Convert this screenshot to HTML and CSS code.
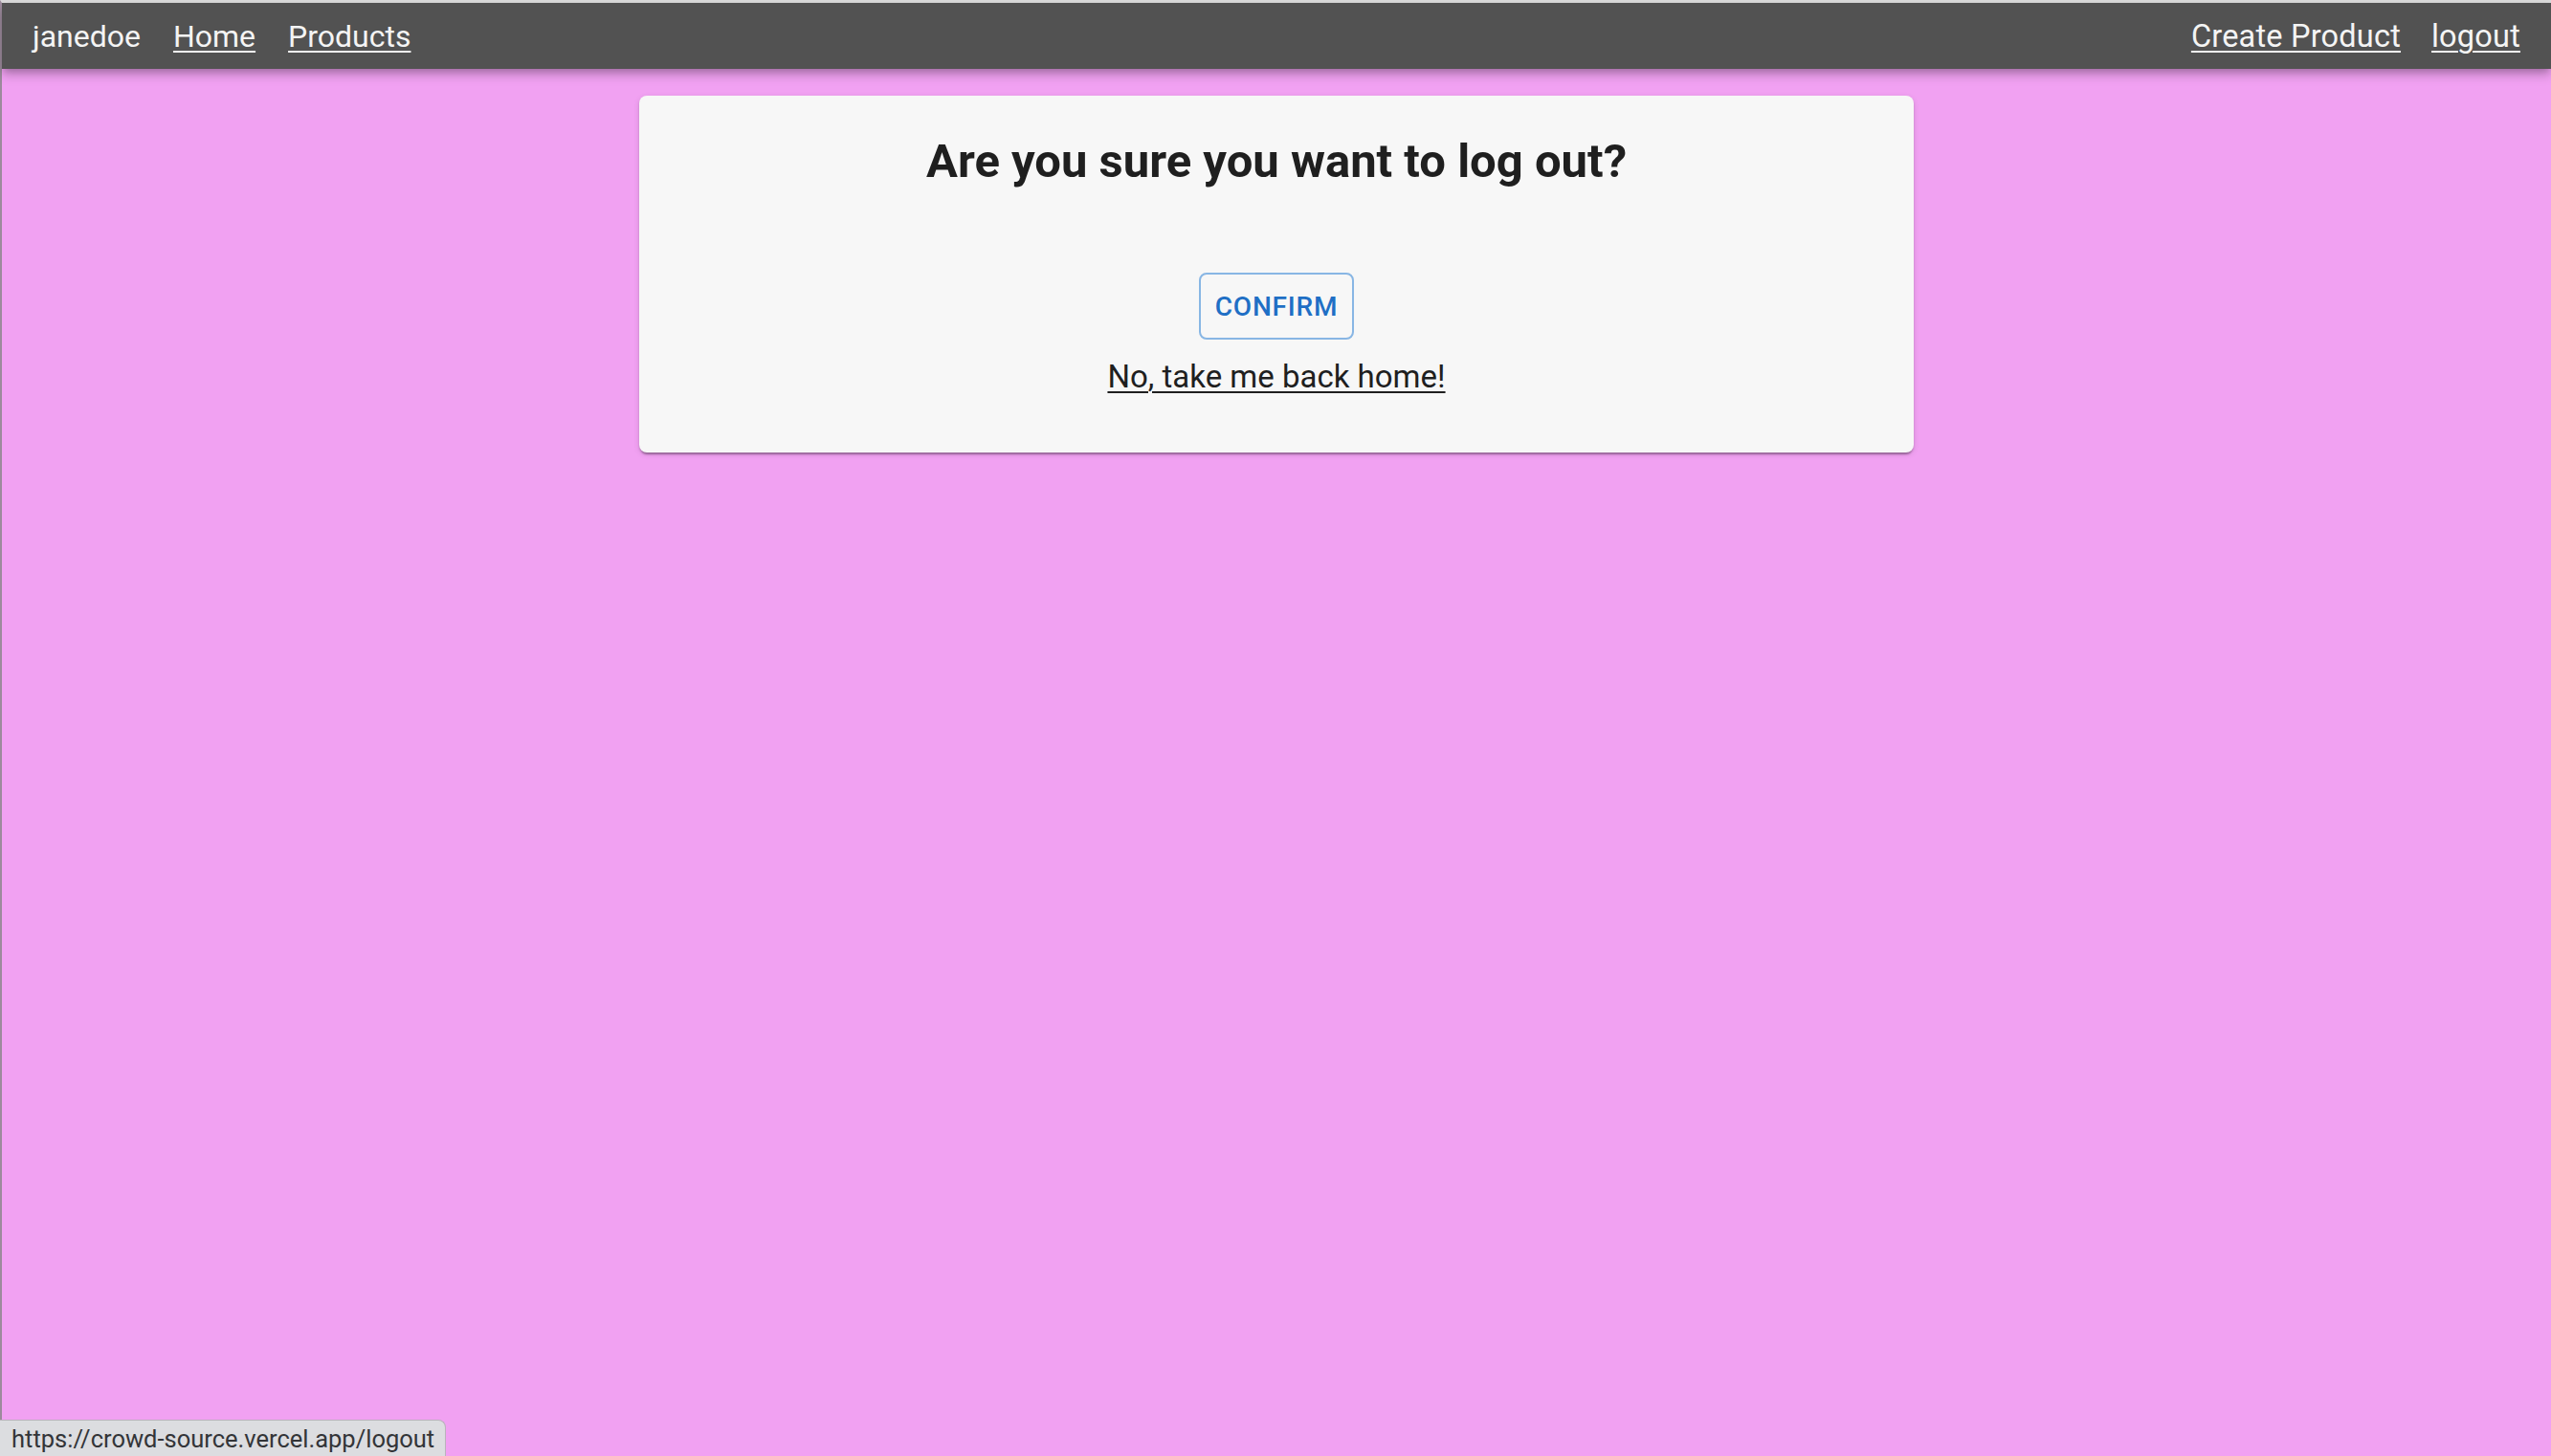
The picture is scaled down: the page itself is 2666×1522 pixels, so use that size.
FILE: index.html
```html
<!DOCTYPE html>
<html lang="en">
<head>
<meta charset="utf-8">
<title>Logout</title>
<link rel="stylesheet" href="styles.css">
</head>
<body>
<div class="frame">
  <header class="nav">
    <div class="nav-group">
      <span class="nav-user">janedoe</span>
      <a class="nav-link" href="#">Home</a>
      <a class="nav-link" href="#">Products</a>
    </div>
    <div class="nav-group nav-group-right">
      <a class="nav-link" href="#">Create Product</a>
      <a class="nav-link" href="#">logout</a>
    </div>
  </header>
  <main class="content">
    <section class="card">
      <h1 class="card-title">Are you sure you want to log out?</h1>
      <button class="btn-outline" type="button">Confirm</button>
      <a class="back-link" href="#">No, take me back home!</a>
    </section>
  </main>
</div>
<div class="status-bar">https://crowd-source.vercel.app/logout</div>
</body>
</html>
```

FILE: styles.css
```css
html, body {
  margin: 0;
  padding: 0;
}
body {
  background: #f1a1f2;
  font-family: Roboto, "Liberation Sans", Arial, sans-serif;
  min-height: 100vh;
}
.frame {
  min-height: 1520px;
  border-top: 3px solid #d9d9d9;
  border-left: 2px solid #9c8a9c;
  box-sizing: border-box;
}
.nav {
  display: flex;
  justify-content: space-between;
  align-items: center;
  height: 69px;
  padding: 2px 32px 0;
  box-sizing: border-box;
  background: #525252;
  box-shadow: 0 4px 8px -2px rgba(0,0,0,0.25), 0 8px 10px 0 rgba(0,0,0,0.14);
}
.nav-group {
  display: flex;
  align-items: center;
  gap: 34px;
}
.nav-group-right {
  gap: 32px;
}
.nav-user, .nav-link {
  color: #f4f4f4;
  font-size: 32px;
  line-height: 1.2;
}
.nav-group-right .nav-link {
  font-size: 32.5px;
  letter-spacing: 0.2px;
}
.nav-link {
  text-decoration: underline;
  text-decoration-thickness: 2px;
  text-underline-offset: 4px;
}
.content {
  display: flex;
  justify-content: center;
  padding-top: 28px;
}
.card {
  width: 1332px;
  box-sizing: border-box;
  background: #f7f7f7;
  border-radius: 8px;
  box-shadow: 0 4px 2px -2px rgba(0,0,0,0.2), 0 2px 2px 0 rgba(0,0,0,0.14), 0 2px 6px 0 rgba(0,0,0,0.12);
  display: flex;
  flex-direction: column;
  align-items: center;
  padding: 41px 0 55px;
}
.card-title {
  margin: 0;
  font-size: 49px;
  line-height: 56px;
  font-weight: 700;
  color: #1f1f1f;
}
.btn-outline {
  margin-top: 88px;
  height: 70px;
  padding: 0 15px;
  border: 2px solid rgba(25,118,210,0.5);
  border-radius: 8px;
  background: transparent;
  color: #1f6fc5;
  font-family: Roboto, "Liberation Sans", Arial, sans-serif;
  font-weight: 500;
  font-size: 28px;
  letter-spacing: 0.8px;
  text-transform: uppercase;
}
.back-link {
  margin-top: 15px;
  color: #1f1f1f;
  font-size: 33px;
  line-height: 48px;
  text-decoration: underline;
  text-decoration-thickness: 2px;
  text-underline-offset: 4px;
}
.status-bar {
  position: fixed;
  left: 0;
  bottom: 0;
  width: 466px;
  height: 38px;
  box-sizing: border-box;
  padding: 0 0 0 12px;
  background: #dcdde0;
  border: 1px solid #b9b3bb;
  border-left: 0;
  border-bottom: 0;
  border-top-right-radius: 8px;
  color: #333538;
  font-family: Roboto, "Liberation Sans", Arial, sans-serif;
  font-size: 25.5px;
  line-height: 38px;
  white-space: nowrap;
}
```
